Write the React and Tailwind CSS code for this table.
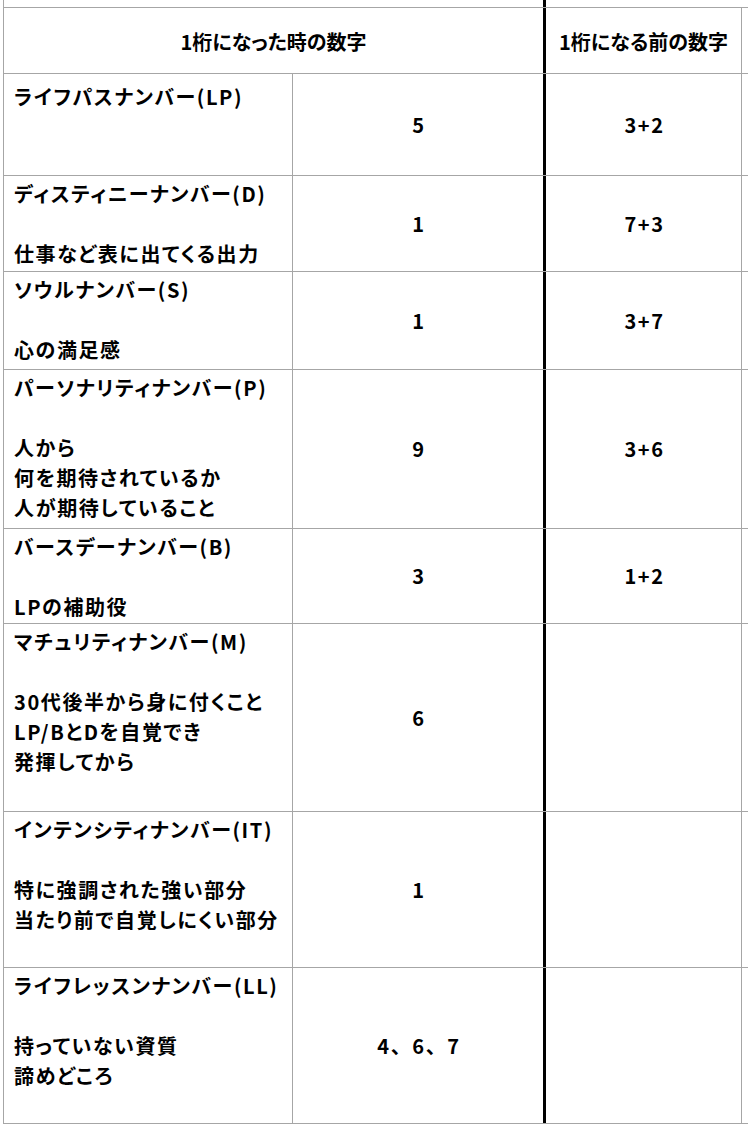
import React from "react";

const rows = [
  { h: "h-[102px]", pt: "pt-[8px]", lines: ["ライフパスナンバー(LP)"], n: "5", b: "3+2" },
  { h: "h-[96px]", pt: "pt-[3px]", lines: ["ディスティニーナンバー(D)", "", "仕事など表に出てくる出力"], n: "1", b: "7+3" },
  { h: "h-[98px]", pt: "pt-[3px]", lines: ["ソウルナンバー(S)", "", "心の満足感"], n: "1", b: "3+7" },
  { h: "h-[159px]", pt: "pt-[3px]", lines: ["パーソナリティナンバー(P)", "", "人から", "何を期待されているか", "人が期待していること"], n: "9", b: "3+6" },
  { h: "h-[95px]", pt: "pt-[3px]", lines: ["バースデーナンバー(B)", "", "LPの補助役"], n: "3", b: "1+2" },
  { h: "h-[188px]", pt: "pt-[3px]", lines: ["マチュリティナンバー(M)", "", "30代後半から身に付くこと", "LP/BとDを自覚でき", "発揮してから"], n: "6", b: "" },
  { h: "h-[156px]", pt: "pt-[3px]", lines: ["インテンシティナンバー(IT)", "", "特に強調された強い部分", "当たり前で自覚しにくい部分"], n: "1", b: "" },
  { h: "h-[156px]", pt: "pt-[3px]", lines: ["ライフレッスンナンバー(LL)", "", "持っていない資質", "諦めどころ"], n: "4、6、7", b: "" },
];

export default function App() {
  return (
    <div
      className="w-[748px] h-[1128px] overflow-hidden bg-white text-black font-bold text-[20px] leading-[30px] tracking-[1.6px] [font-feature-settings:'palt']"
      style={{ fontFamily: '"Noto Sans CJK JP", "Noto Sans", sans-serif' }}
    >
      <div className="ml-[3px] w-[760px] border-l border-[#a6a6a6]">
        {/* stub of the row above */}
        <div className="flex h-[7px]">
          <div className="w-[539px]" />
          <div className="flex-1 border-l-[3px] border-black" />
        </div>

        {/* header */}
        <div className="flex h-[66px] border-t border-[#a6a6a6] tracking-[0px]">
          <div className="w-[539px] flex items-center justify-center pt-[3px] whitespace-nowrap">
            1桁になった時の数字
          </div>
          <div className="w-[198px] border-l-[3px] border-black flex items-center justify-center pt-[3px] whitespace-nowrap">
            1桁になる前の数字
          </div>
          <div className="flex-1 border-l border-[#a6a6a6]" />
        </div>

        {rows.map((r, i) => (
          <div key={i} className={`flex border-t border-[#a6a6a6] ${r.h}`}>
            <div className={`w-[288px] pl-[10px] ${r.pt}`}>
              {r.lines.map((l, j) => (
                <div key={j} className="whitespace-nowrap h-[30px]">
                  {l}
                </div>
              ))}
            </div>
            <div className="w-[251px] border-l border-[#a6a6a6] flex items-center justify-center pl-[2px] whitespace-nowrap [font-feature-settings:normal]">
              {r.n}
            </div>
            <div className="w-[198px] border-l-[3px] border-black flex items-center justify-center pl-[2px] whitespace-nowrap [font-feature-settings:normal]">
              {r.b}
            </div>
            <div className="flex-1 border-l border-[#a6a6a6]" />
          </div>
        ))}

        {/* bottom line */}
        <div className="h-[1px] bg-[#a6a6a6]" />
      </div>
    </div>
  );
}
